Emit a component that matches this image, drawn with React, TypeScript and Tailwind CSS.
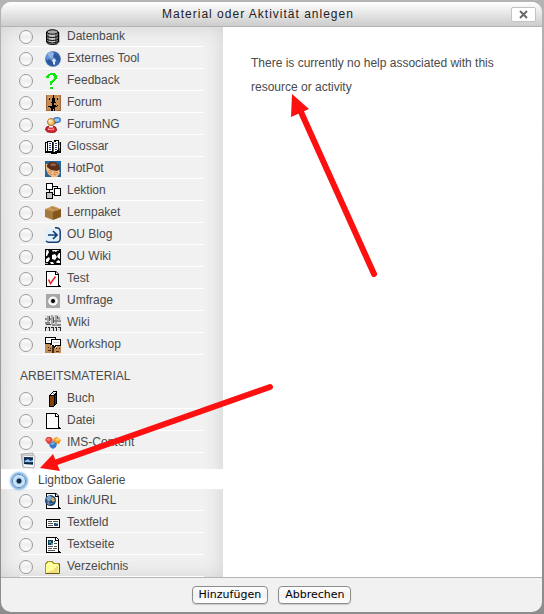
import { useState, type ReactNode } from "react";

function Sheet() {
  return (
    <>
      <path d="M1 0h10l3 3v13H1z" fill="#000" />
      <path d="M2 1h8v3h3v11H2z" fill="#fff" />
      <path d="M11 1l2 2h-2z" fill="#fff" />
      <path d="M14 14h1v1h1v1h-3z" fill="#000" />
    </>
  );
}

const icons: Record<string, ReactNode> = {
  datenbank: (
    <>
      <path d="M4 1h8l3 3v9l-3 3H5z" fill="#b5b5b5" />
      <path d="M1 3v10q1 2.500 6 2.500t6-2.500V3q-1-2.500-6-2.500T1 3z" fill="#777" />
      <path d="M4 4h6v11H4z" fill="#c4c4c4" />
      <ellipse cx="7.500" cy="3" rx="5.500" ry="2.200" fill="#a8a8a8" stroke="#000" />
      <path d="M1.500 3v10q1 2.500 6 2.500t6-2.500V3M1.500 6.500q1 2 6 2t6-2M1.500 9.500q1 2 6 2t6-2M1.500 12q1 2 6 2t6-2" fill="none" stroke="#000" />
    </>
  ),
  extern: (
    <>
      <circle cx="8" cy="8" r="7.800" fill="#3765ae" />
      <circle cx="6" cy="6" r="5" fill="#6692d6" />
      <path d="M6 1l3 1 2 2-1 2-3 1-3-1-1-2-1 1 1-3z" fill="#8fb2e4" />
      <path d="M9 2l3 2 3 3v3l-3-1-2-2-2-1zM3 8l3 1 2 3v3L4 13 2 10z" fill="#2d559c" />
      <path d="M8 8l2 0 1 2-1 1 0 3-2-1 0-2-1-1z" fill="#dbe8f8" />
    </>
  ),
  feedback: (
    <path d="M1 3h1V2h1V1h2V0h5v1h1v1h1v4h-1v1h-1v1H9v1H8v1H7v2H5V8h2V7h1V6h1V3H8V2H5v1H4v2H1zM5 14h3v2H5z" fill="#0be80b" />
  ),
  forum: (
    <>
      <path d="M1 0h15v16H1z" fill="#c68c56" />
      <path d="M8 0h1v3h1v4h1v1H9v2h2v1h1v1h-2v4H9v-2H8v2H6v-3H5v-1H4v-1h3V8H6V7h1V3h1z" fill="#000" />
      <path d="M4 3h1v2H4zM12 3h1v2h-1zM3 11h1v1H3zM12 10h1v1h-1z" fill="#000" />
      <path d="M1 15h4v1H1zM12 15h4v1h-4zM1 0h1v16H1zM15 0h1v16h-1z" fill="#9b683b" />
      <path d="M3 2h2v1H3zM12 2h2v1h-2z" fill="#e5b88c" />
    </>
  ),
  forumng: (
    <>
      <path d="M9 5l-1 3 4-2q4 0 4-3t-4-3q-4 0-4 3z" fill="#3973ba" />
      <ellipse cx="12" cy="3" rx="2.800" ry="1.800" fill="#92caff" />
      <circle cx="6" cy="5" r="3.500" fill="#f8c56e" stroke="#a8731f" />
      <circle cx="5" cy="4" r="1.500" fill="#fff2d2" />
      <path d="M.5 13q0-4 4-4l1 1 2-1q4 0 4 4 0 2.500-5 2.500T.5 13z" fill="#d92a35" stroke="#991521" />
      <path d="M3 11q3 2 6 0v2H3z" fill="#ff9293" />
      <path d="M4 9h4v1.500H4z" fill="#fff" />
    </>
  ),
  glossar: (
    <>
      <path d="M0 3h2V2h5v1h2V1h5v2h2v11h-4v1H6v-1H0z" fill="#000" />
      <path d="M1 4h1v8H1zM3 3h4v9H3zM9 3l4-1v9l-4 2z" fill="#fff" />
      <path d="M4 4h2v1H4zM4 6h2v1H4zM4 8h2v1H4zM4 10h2v1H4zM10 4h2v1h-2zM10 6h2v1h-2zM10 8h2v1h-2zM10 10h2v1h-2z" fill="#26398d" />
      <path d="M8 3h1v10H8z" fill="#33499b" />
      <path d="M14 3h1v3h-1z" fill="#24b6e8" />
      <path d="M14 6h1v3h-1z" fill="#f5d928" />
      <path d="M14 9h1v3h-1z" fill="#df2626" />
    </>
  ),
  hotpot: (
    <>
      <path d="M0 0h16v16H0z" fill="#2b6596" />
      <path d="M1 3l2 0 2 5 9 1 1 3-3 4H7l-4-3-2-5z" fill="#f2bd86" />
      <path d="M2 4l3-3 5 0 4 3 1 4-3 2-6-1-4-3z" fill="#5a2c1a" />
      <path d="M5 3l4-1 3 2-2 1-4 0z" fill="#945d40" />
      <path d="M4 9l3 2M3 11l4 3M9 11l4 1M8 13l3 1" fill="none" stroke="#c77f45" />
    </>
  ),
  lektion: (
    <>
      <path d="M1 0h7v7H1zM9 5h7v8H9zM1 9h7v7H1zM4 7h1v2H4zM8 3h4v1H8zM12 3h1v2h-1zM8 11h1v1H8z" fill="#000" />
      <path d="M2 1h5v5H2zM10 6h5v6h-5z" fill="#fff" />
      <path d="M2 10h5v5H2z" fill="#c3c3c3" />
    </>
  ),
  lernpaket: (
    <>
      <path d="M0 4l8-3 8 3-8 3z" fill="#c99a5c" />
      <path d="M0 4l8 2.500V15l-8-3z" fill="#a5783c" />
      <path d="M8 6.500L16 4v8l-8 3z" fill="#82581f" />
      <path d="M5 2l2-.8 6 3.800-2 .8z" fill="#b7874a" />
    </>
  ),
  oublog: (
    <>
      <rect x="0" y="1" width="15" height="14" rx="4" fill="#e3f1fc" />
      <path d="M10 .8h1q4.200 0 4.200 4v6.500q0 4-4 4H4q-2 0-3-1.500" fill="none" stroke="#123e72" strokeWidth="1.500" />
      <path d="M3 8h8M8 4l4 4-4 4" fill="none" stroke="#123e72" strokeWidth="1.700" />
    </>
  ),
  ouwiki: (
    <>
      <path d="M0 0h16v16H0z" fill="#050505" />
      <path d="M1 1h2l1 2-2 4H1zM7 1h6l-2 2-2-1-1 1zM14 4h1v6l-2-1-1-2zM7 6l3-1 2 3-2 3-3-1zM1 10l3-2 1 2-2 3H1zM5 13l3 0 1 2H6zM11 13l2-2 2 1v2h-3z" fill="#fff" />
      <path d="M1 1h1v2H1zM12 1h2v1h-2zM0 14h3v1H0z" fill="#a5a5a5" />
    </>
  ),
  test: (
    <>
      <Sheet />
      <path d="M3.500 8.500l2 4 5-7" fill="none" stroke="#ee1b24" strokeWidth="1.500" />
    </>
  ),
  umfrage: (
    <>
      <path d="M1 1h14v14H1z" fill="#a7a7a7" />
      <path d="M3 7q5-5 10 0v3q-5 5-10 0z" fill="#ccc" />
      <circle cx="8" cy="8" r="4.500" fill="#fff" />
      <circle cx="8" cy="8" r="3" fill="#ddd" />
      <circle cx="8" cy="8" r="2" fill="#000" />
    </>
  ),
  wiki: (
    <>
      <path d="M0 0h16v16H0z" fill="#e2e2e2" />
      <path d="M0 3h6v2H0zM0 7h5v2H0zM7 5h9v2H7zM7 9h9v2H7z" fill="#8a8a8a" />
      <path d="M2 1h2v6H2zM6 0h2v10H6zM10 0h2v5h-2zM13 2h2v4h-2zM10 7h2v4h-2z" fill="#a8a8a8" />
      <path d="M4 1h1v5H4zM8 2h1v6H8zM12 1h1v3h-1zM1 9h5v1H1z" fill="#555" />
      <path d="M0 12h2v1H1v3H0zM3 12h2v4H4v-3H3zM6 12h3v4H8v-3H6zM10 12h2v4h-1v-3h-1zM13 12h3v4h-1v-3h-2z" fill="#272727" />
    </>
  ),
  workshop: (
    <>
      <path d="M0 0h11v2h5v7h-5l-2 2-1-2-3-1-1-1H0z" fill="#000" />
      <path d="M1 1h9v1H6v4H1zM7 3h8v5h-5l-1 1-1-1H7z" fill="#fff" />
      <path d="M2 3h3v1H2zM8 5h6v1H8z" fill="#ccc" />
      <path d="M0 7h4l3 2v7H0zM9 11h1l2-2h4v7H9z" fill="#c18b53" />
      <path d="M7 9h2v7H7zM3 10h1v1H3zM5 11h1v1H5zM11 11h1v1h-1zM14 11h1v1h-1zM3 13h3v1H3zM11 14h3v1h-3z" fill="#432713" />
    </>
  ),
  buch: (
    <>
      <path d="M4 4l4-4h4v12l-3 4H4z" fill="#000" />
      <path d="M5 5h4v10H5z" fill="#854000" />
      <path d="M5 4l3-3h3L8 4z" fill="#f4f4f4" />
      <path d="M10 5l1-2v9l-1 1z" fill="#5b2900" />
      <path d="M8 2h1v1H8z" fill="#777" />
    </>
  ),
  datei: <Sheet />,
  ims: (
    <>
      <path d="M0 5l2-3h4l2 3-3 4H3z" fill="#e64537" />
      <path d="M9 3l3-1 4 3-2 4h-3L8 6z" fill="#f19b23" />
      <path d="M4 9l4-3 4 3-1 3-3 2-3-2z" fill="#3776c7" />
      <path d="M1 4l3-1 2 2-3 1z" fill="#ff7767" />
      <path d="M10 4l3-1 2 2-3 1z" fill="#ffd563" />
      <path d="M5 9l3-2 2 2-3 1z" fill="#76b4f2" />
    </>
  ),
  lightbox: (
    <>
      <path d="M1 1l12-1 1 13-11 1z" fill="#dcdcdc" stroke="#999" strokeWidth=".8" />
      <path d="M3 2l12 1-1 12-11-1z" fill="#fafafa" stroke="#aaa" strokeWidth=".8" />
      <path d="M4 4l9 .5v7L4 11z" fill="#28598b" />
      <path d="M4 4l9 .5v3L4 7z" fill="#112b58" />
      <path d="M5 8l3-2 2 2 3-1v2H5z" fill="#9cc8f0" />
      <path d="M4 10l3-1 2 1 4-1v2.500L4 11z" fill="#10243b" />
    </>
  ),
  link: (
    <>
      <Sheet />
      <circle cx="5.500" cy="7.500" r="5.500" fill="#204979" />
      <path d="M1 5l3-3 3 2-1 3-3 2z" fill="#7fa6cc" />
      <path d="M7 4l2 1 1 3-2 1-2-2zM3 9l2 1-1 2-2-2z" fill="#d9a955" />
      <path d="M4 9l2 1-1 2-2-2zM6 10h2v1H6z" fill="#3b7ec2" />
    </>
  ),
  textfeld: (
    <>
      <path d="M1 4h14v9H1z" fill="#000" />
      <path d="M2 5h12v7H2z" fill="#fff" />
      <path d="M3 6h4v1H3zM8 6h5v1H8zM3 8h5v1H3zM3 10h5v1H3z" fill="#555" />
      <path d="M9 8h4v3H9z" fill="#264f94" />
      <path d="M11 8h2v1h-2z" fill="#55af67" />
    </>
  ),
  textseite: (
    <>
      <Sheet />
      <path d="M3 3h5v5H3z" fill="#153d70" />
      <path d="M4 4h2v2H4zM6 6h2v2H6z" fill="#51a765" />
      <path d="M9 4h1v1H9zM9 6h3v1H9zM3 9h5v1H3zM9 9h3v1H9zM3 11h4v1H3zM8 11h4v1H8zM3 13h7v1H3z" fill="#555" />
    </>
  ),
  verzeichnis: (
    <>
      <path d="M0 4l2-2h5l2 2h5l1 1v9l-1 1H0z" fill="#a8932a" />
      <path d="M1 5l2-2h3l2 2h5v9H1z" fill="#ffff9b" />
      <path d="M1 6h13v8H1z" fill="#ffff99" />
      <path d="M5 12h2v-1h2v-2h2V7h2v7H4v-2zM2 13h2v1H2z" fill="#f3dc80" />
      <path d="M1 14h13v1H1zM14 5h1v9h-1z" fill="#6a5b10" />
    </>
  ),
};

const smooth = new Set(["extern", "forumng", "hotpot", "lernpaket", "oublog", "ims", "umfrage", "lightbox", "ouwiki", "link", "datenbank", "test"]);

function Icon({ name }: { name: string }) {
  return (
    <svg
      className="size-4 shrink-0 overflow-visible"
      viewBox="0 0 16 16"
      shapeRendering={smooth.has(name) ? "auto" : "crispEdges"}
      aria-hidden="true"
    >
      {icons[name]}
    </svg>
  );
}

const activities = [
  ["datenbank", "Datenbank"],
  ["extern", "Externes Tool"],
  ["feedback", "Feedback"],
  ["forum", "Forum"],
  ["forumng", "ForumNG"],
  ["glossar", "Glossar"],
  ["hotpot", "HotPot"],
  ["lektion", "Lektion"],
  ["lernpaket", "Lernpaket"],
  ["oublog", "OU Blog"],
  ["ouwiki", "OU Wiki"],
  ["test", "Test"],
  ["umfrage", "Umfrage"],
  ["wiki", "Wiki"],
  ["workshop", "Workshop"],
];

const resources = [
  ["buch", "Buch"],
  ["datei", "Datei"],
  ["ims", "IMS-Content"],
  ["lightbox", "Lightbox Galerie"],
  ["link", "Link/URL"],
  ["textfeld", "Textfeld"],
  ["textseite", "Textseite"],
  ["verzeichnis", "Verzeichnis"],
];

type OptionProps = {
  id: string;
  label: string;
  selected: string;
  onSelect: (id: string) => void;
};

function Option({ id, label, selected, onSelect }: OptionProps) {
  const radio = (
    <input
      type="radio"
      name="module"
      value={id}
      checked={selected === id}
      onChange={() => onSelect(id)}
      className="mb-px size-3.5 shrink-0 appearance-none rounded-full border border-[#999] bg-[linear-gradient(#fff,#ededed_50%,#fff)] checked:border-[#4f80b5] checked:bg-[radial-gradient(circle,#10243c_2px,#b0d6f6_3px,#dff1ff_6px)] checked:shadow-[0_0_2px_2px_#7db1e4]"
    />
  );
  if (id === "lightbox") {
    return (
      <li>
        <label>
          <span className="mx-[19px] block h-4">
            <Icon name={id} />
          </span>
          <span className="flex h-5 items-end bg-white pl-[11px]">
            {radio}
            <span className="mb-px ml-3 leading-4">{label}</span>
          </span>
        </label>
      </li>
    );
  }
  return (
    <li className="mx-[19px]">
      <label className="flex h-[22px] items-end border-b border-white pb-px">
        <span className="-ml-px flex">{radio}</span>
        <span className="ml-3">
          <Icon name={id} />
        </span>
        <span className="mb-px ml-1.5 leading-4">{label}</span>
      </label>
    </li>
  );
}

const footerButton =
  "rounded border border-[#8c8c8c] bg-[linear-gradient(#fff,#f1f1f1_50%,#fff)] px-1.5 shadow-[0_1px_1px_#ccc]";

export default function App() {
  const [selected, setSelected] = useState("lightbox");
  return (
    <div className="flex min-h-screen flex-col bg-[linear-gradient(#b4b4b4,#8c8c8c)] pt-0.5 pr-0.5 pb-0.5 pl-px font-['Liberation_Sans',Arial,sans-serif] text-xs text-[#4a4a4a]">
      <section
        role="dialog"
        aria-labelledby="chooser-title"
        className="relative flex grow flex-col rounded-[10px] bg-[#f1f1f1]"
      >
        <header className="flex h-[25px] items-center rounded-t-[10px] border-b border-[#b4b4b4] bg-[linear-gradient(#fff,#ccc)] pr-1.5 pl-1">
          <h1 id="chooser-title" className="grow text-center tracking-[1px] text-[#222]">
            Material oder Aktivität anlegen
          </h1>
          <button
            type="button"
            aria-label="Schließen"
            className="flex h-[15px] w-[25px] items-center justify-center rounded-xs border border-[#c2c2c2] bg-white"
          >
            <svg className="size-[9px]" viewBox="0 0 9 9" aria-hidden="true">
              <path d="M1 1l7 7M8 1L1 8" stroke="#6a6a6a" strokeWidth="2" />
            </svg>
          </button>
        </header>
        <form className="flex grow flex-col" onSubmit={(e) => e.preventDefault()}>
          <div className="flex grow bg-white">
            <div className="w-[222px] shrink-0 overflow-hidden bg-[#f1f1f1] shadow-[inset_0_0_20px_#d0d0d0]">
              <ul className="-mt-0.5">
                {activities.map(([id, label]) => (
                  <Option key={id} id={id} label={label} selected={selected} onSelect={setSelected} />
                ))}
              </ul>
              <h2 className="flex h-8 items-end px-[19px] pb-[3px] leading-4">ARBEITSMATERIAL</h2>
              <ul>
                {resources.map(([id, label]) => (
                  <Option key={id} id={id} label={label} selected={selected} onSelect={setSelected} />
                ))}
              </ul>
            </div>
            <p className="grow basis-0 pt-6 pr-7 pl-7 leading-6">
              There is currently no help associated with this resource or activity
            </p>
          </div>
          <footer className="flex h-[35px] items-center justify-center gap-2.5 border-t border-[#b4b4b4] font-['DejaVu_Sans',sans-serif] text-[11px] leading-4 text-black">
            <button type="submit" className={footerButton}>
              Hinzufügen
            </button>
            <button type="button" className={footerButton}>
              Abbrechen
            </button>
          </footer>
        </form>
        <svg
          className="pointer-events-none absolute -top-0.5 -left-px h-[300px] w-[400px] overflow-visible"
          viewBox="0 0 400 300"
          fill="#fd1010"
          stroke="#fd1010"
          aria-hidden="true"
        >
          <path d="M374 274L301 112M270 387L57 462" strokeWidth="6" strokeLinecap="round" />
          <path d="M292 94L291 117L309 109zM40 468L53 454L60 471z" stroke="none" />
        </svg>
      </section>
    </div>
  );
}
